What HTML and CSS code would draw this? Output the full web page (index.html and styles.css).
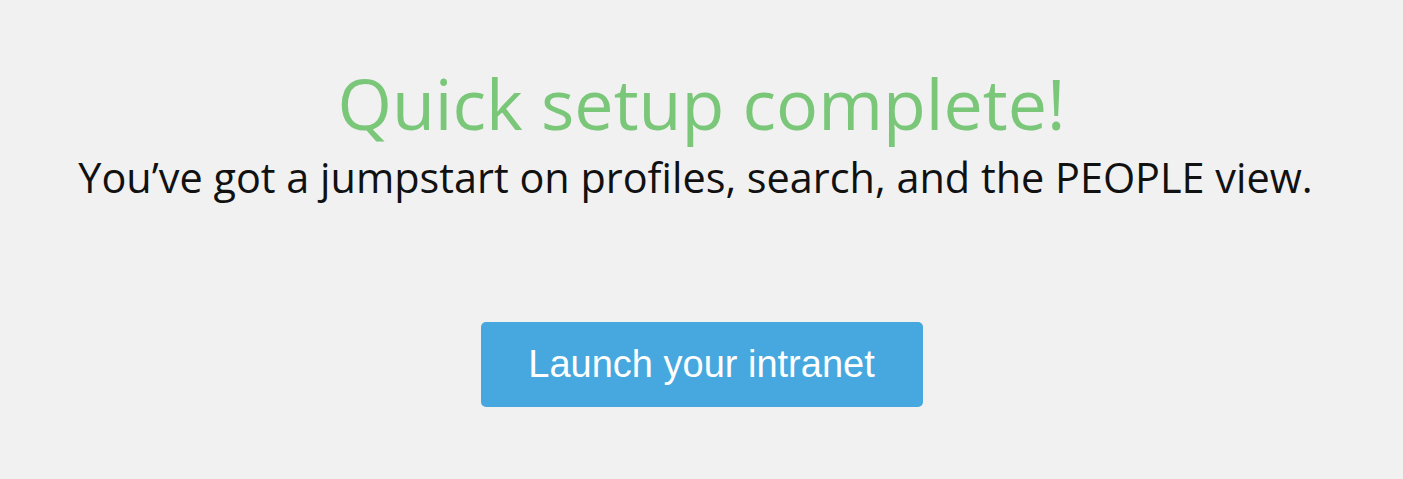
FILE: index.html
```html
<!DOCTYPE html>
<html>
  <head>
    <title>Quick setup complete</title>
    <meta charset="utf-8">
    <link rel="stylesheet" href="styles.css">
  </head>
  <body>
    <div class="setup-done">
      <h1 class="done-title">Quick setup complete!</h1>
      <p class="done-text">You’ve got a jumpstart on profiles, search, and the PEOPLE view.</p>
      <div class="launch-row">
        <a class="launch-button" href="#">Launch your intranet</a>
      </div>
    </div>
  </body>
</html>
```

FILE: styles.css
```css
body {
  background-color: #f1f1f1;
  margin: 0px;
}

.setup-done {
  padding-top: 58px;
  text-align: center;
}

.done-title {
  margin: 0;
  font-family: 'Open Sans', sans-serif;
  font-weight: normal;
  font-size: 70px;
  line-height: 90px;
  color: #7ac77a;
}

.done-text {
  margin: 3px 0 0 0;
  padding-right: 12px;
  font-family: 'Open Sans', sans-serif;
  font-size: 41.4px;
  line-height: 52px;
  color: #111111;
}

.launch-row {
  margin-top: 119px;
}

.launch-button {
  display: inline-block;
  width: 442px;
  height: 85px;
  line-height: 85px;
  background-color: #46a8de;
  border-radius: 5px;
  font-family: 'Liberation Sans', Arial, sans-serif;
  font-size: 38px;
  color: #ffffff;
  text-decoration: none;
}
```
